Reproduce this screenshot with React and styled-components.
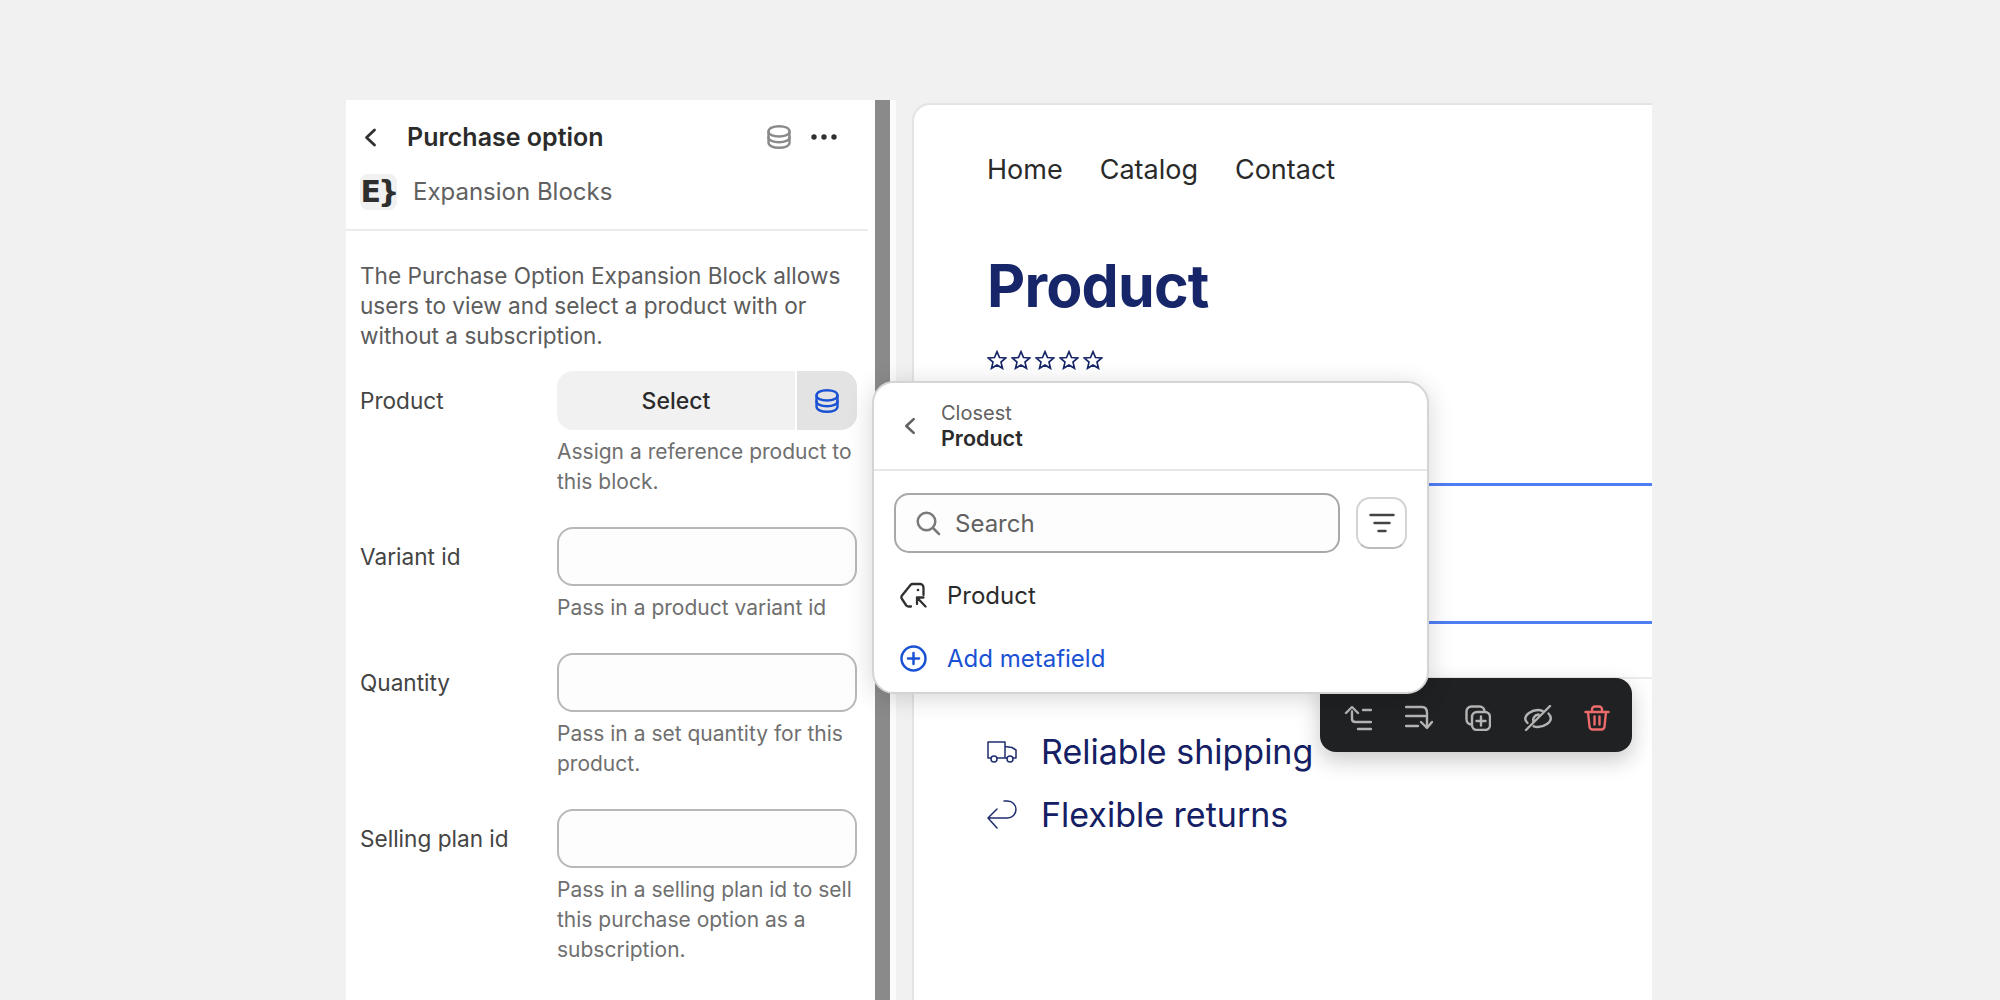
import React from "react";
import styled, { createGlobalStyle } from "styled-components";

const Global = createGlobalStyle`
  html, body { margin: 0; padding: 0; background: #f1f1f1; }
  body { font-family: Inter, "Liberation Sans", sans-serif; height: 1000px; overflow: hidden; }
  * { box-sizing: border-box; }
`;
const Stage = styled.div`position: relative; width: 2000px; height: 1000px; overflow: hidden; display: flex; padding: 100px 0 0 346px;`;
const Panel = styled.aside`width: 529px; height: 900px; background: #fff; padding-right: 7px; flex: none;`;
const Scrollbar = styled.div`width: 15px; height: 900px; background: #8a8a8a; flex: none;`;
const Strip = styled.div`width: 6px; height: 900px; background: #fbfbfb; flex: none;`;
const Frame = styled.main`width: 740px; height: 897px; margin: 3px 0 0 16px; background: #fff; border-top: 2px solid #e4e4e4; border-left: 2px solid #e4e4e4; border-top-left-radius: 18px; padding: 0 0 0 73px; flex: none; overflow: hidden;`;

const PanelHead = styled.header`display: flex; align-items: center; height: 74px; padding: 0 0 0 18px; color: #303030;`;
const Title = styled.h1`margin: 0 0 0 30px; font-size: 25px; font-weight: 600; line-height: 30px; color: #2b2b2b; flex: 1;`;
const HeadIcons = styled.div`display: flex; align-items: center; gap: 20px; margin-right: 31px;`;
const AppRow = styled.div`display: flex; align-items: center; gap: 16px; height: 57px; padding: 0 0 20px 14px; border-bottom: 2px solid #ebebeb;`;
const Logo = styled.div`width: 37px; height: 36px; border-radius: 8px; background: #f1f1f1; color: #2e2e2e; font: 800 30px/36px "DejaVu Sans", Inter, sans-serif; display: flex; align-items: center; justify-content: center; letter-spacing: -3px;`;
const AppName = styled.div`font-size: 24px; line-height: 30px; color: #616161;`;
const Body = styled.div`padding: 30px 10px 0 14px;`;
const Intro = styled.p`margin: 0 0 20px; font-size: 22.6px; line-height: 30px; color: #5c5c5c;`;
const Field = styled.div`display: grid; grid-template-columns: 197px 300px; margin-bottom: 30px;`;
const Label = styled.label`font-size: 22.6px; line-height: 59px; color: #444;`;
const Help = styled.div`margin-top: 7px; font-size: 21px; line-height: 30px; color: #6f6f6f;`;
const Input = styled.div`height: 59px; border: 2px solid #b8b8b8; border-radius: 16px; background: #fdfdfd;`;
const Combo = styled.div`height: 59px; display: flex; gap: 2px; border-radius: 16px; overflow: hidden;`;
const SelectBtn = styled.div`flex: 1; background: #f1f1f1; color: #2b2b2b; font-size: 23px; font-weight: 500; display: flex; align-items: center; justify-content: center;`;
const SourceBtn = styled.div`width: 60px; background: #e3e3e3; display: flex; align-items: center; justify-content: center;`;

const Nav = styled.nav`display: flex; gap: 37px; padding-top: 47px; font-size: 27px; line-height: 36px; color: #2a2a2a;`;
const Heading = styled.h2`margin: 63px 0 0; font-size: 59px; font-weight: 700; line-height: 70px; letter-spacing: -0.8px; color: #172668;`;
const Rating = styled.div`display: flex; align-items: center; gap: 4px; margin-top: 24px; height: 30px; color: #172668; font-size: 22px;`;
const RuleBlue = styled.div`height: 3px; background: #4f7df3; margin-top: ${p => p.$gap}px;`;
const Rule = styled.div`height: 2px; background: #ececec; margin-top: 53px;`;
const Perks = styled.ul`list-style: none; margin: 52px 0 0; padding: 0; display: flex; flex-direction: column; gap: 22px;`;
const Perk = styled.li`display: flex; align-items: center; gap: 24px; font-size: 34px; line-height: 41px; color: #152064;`;

const Popup = styled.section`position: absolute; left: 872px; top: 381px; width: 557px; height: 313px; background: #fff; border-radius: 22px; border: 2px solid #d4d4d4; box-shadow: 0 4px 26px rgba(0,0,0,.16); display: flex; flex-direction: column;`;
const PopHead = styled.div`display: flex; align-items: center; height: 88px; padding: 0 0 0 30px; gap: 25px; border-bottom: 2px solid #e6e6e6;`;
const PopTitles = styled.div`display: flex; flex-direction: column;`;
const Crumb = styled.span`font-size: 20px; line-height: 25px; color: #616161;`;
const PopTitle = styled.span`font-size: 21.5px; line-height: 25px; font-weight: 600; color: #2b2b2b;`;
const SearchRow = styled.div`display: flex; align-items: center; gap: 16px; padding: 22px 0 0 20px;`;
const SearchBox = styled.div`width: 446px; height: 60px; border: 2px solid #a8a8a8; border-radius: 15px; background: #fdfdfd; display: flex; align-items: center; gap: 14px; padding-left: 20px; font-size: 24px; color: #616161;`;
const FilterBtn = styled.div`width: 51px; height: 52px; border: 2px solid #d4d4d4; border-bottom-color: #bcbcbc; border-radius: 14px; background: #fff; display: flex; align-items: center; justify-content: center;`;
const PopRow = styled.div`display: flex; align-items: center; gap: 20px; height: 30px; padding-left: 26px; font-size: 24px; color: ${p => p.$blue ? "#1a52d4" : "#2b2b2b"}; margin-top: ${p => p.$top}px;`;

const Toolbar = styled.div`position: absolute; left: 1320px; top: 678px; width: 312px; height: 74px; padding: 6px 22px 0 24px; background: #202123; border-radius: 16px; box-shadow: 0 8px 22px rgba(0,0,0,.22); display: flex; align-items: center; justify-content: space-between;`;

const Db = ({ color = "#8a8a8a", s = 2.4 }) => (
  <svg width="24" height="24" viewBox="0 0 24 24" fill="none" stroke={color} strokeWidth={s} strokeLinecap="round">
    <path d="M1.5 6.5C1.5 3.2 6 1.2 12 1.2s10.500 2 10.500 5.300v11c0 3.300-4.500 5.300-10.500 5.300S1.500 20.800 1.500 17.500z" />
    <path d="M1.500 6.500c0 3.100 4.500 5 10.500 5s10.500-1.900 10.500-5" />
    <path d="M1.500 12.300c0 3.100 4.500 5 10.500 5s10.500-1.900 10.500-5" />
  </svg>
);
const Chevron = ({ color = "#303030", w = 13, h = 19, s = 2.8 }) => (
  <svg width={w} height={h} viewBox="0 0 13 19" fill="none" stroke={color} strokeWidth={s} strokeLinecap="round" strokeLinejoin="round">
    <path d="M10.500 2L2.500 9.500l8 7.500" />
  </svg>
);
const Dots = () => (
  <svg width="26" height="6" viewBox="0 0 26 6" fill="#303030">
    <circle cx="3" cy="3" r="2.700" /><circle cx="13" cy="3" r="2.700" /><circle cx="23" cy="3" r="2.700" />
  </svg>
);
const SearchIcon = () => (
  <svg width="25" height="25" viewBox="0 0 25 25" fill="none" stroke="#7a7a7a" strokeWidth="2.500" strokeLinecap="round">
    <circle cx="10.500" cy="10.500" r="8.800" /><path d="M17 17l6 6" />
  </svg>
);
const FilterIcon = () => (
  <svg width="26" height="20" viewBox="0 0 26 20" fill="none" stroke="#444" strokeWidth="2.500" strokeLinecap="round">
    <path d="M1.500 2h23M5.500 10h15M9.500 18h7" />
  </svg>
);
const TagIcon = () => (
  <svg width="27" height="27" viewBox="0 0 27 27" fill="none" stroke="#303030" strokeWidth="2.300" strokeLinecap="round" strokeLinejoin="round">
    <path d="M11 24.500H8.500a3 3 0 0 1-2.200-1L2 17a3 3 0 0 1 0-3.500L10.500 3a3 3 0 0 1 2.300-1H20a3.500 3.500 0 0 1 3.500 3.500V13" />
    <circle cx="18" cy="8" r="1.300" fill="#303030" stroke="none" />
    <path d="M17 15.500h6.500M17 15.500V22M17 15.500l8.500 9" />
  </svg>
);
const PlusIcon = () => (
  <svg width="27" height="27" viewBox="0 0 27 27" fill="none" stroke="#1a52d4" strokeWidth="2.500" strokeLinecap="round">
    <circle cx="13.500" cy="13.500" r="12" /><path d="M13.500 8v11M8 13.500h11" />
  </svg>
);
const TIcon = ({ children, w = 28, color = "#b3b3b3" }) => (
  <svg width={w} height="26" viewBox={`0 0 ${w} 26`} fill="none" stroke={color} strokeWidth="2.400" strokeLinecap="round" strokeLinejoin="round">{children}</svg>
);
const Truck = () => (
  <svg width="30" height="22" viewBox="0 0 30 22" fill="none" stroke="#1f2d6e" strokeWidth="1.500" strokeLinejoin="round">
    <path d="M4 17H1V1h17v16H10M18 5.500l7 1 4 2.500v8h-3M18 17h2" />
    <circle cx="7" cy="18" r="3" /><circle cx="23" cy="18" r="3" />
  </svg>
);
const Return = () => (
  <svg width="30" height="29" viewBox="0 0 30 29" fill="none" stroke="#1f2d6e" strokeWidth="1.500" strokeLinecap="round" strokeLinejoin="round">
    <path d="M17 1h3.500a8.500 8.500 0 0 1 0 17H1M10 9l-9 9 9 10" />
  </svg>
);
const Star = () => (
  <svg width="20" height="20" viewBox="0 0 24 24" fill="none" stroke="#172668" strokeWidth="2">
    <path d="M12 2l3 7 7.500.6-5.700 5 1.800 7.400L12 18l-6.600 4 1.800-7.400-5.700-5L9 9z" />
  </svg>
);

const fields = [
  { label: "Variant id", help: "Pass in a product variant id" },
  { label: "Quantity", help: "Pass in a set quantity for this product." },
  { label: "Selling plan id", help: "Pass in a selling plan id to sell this purchase option as a subscription." },
];

export default function App() {
  return (
    <>
      <Global />
      <Stage>
        <Panel>
          <PanelHead>
            <Chevron />
            <Title>Purchase option</Title>
            <HeadIcons><Db /><Dots /></HeadIcons>
          </PanelHead>
          <AppRow>
            <Logo>E{"}"}</Logo>
            <AppName>Expansion Blocks</AppName>
          </AppRow>
          <Body>
            <Intro>The Purchase Option Expansion Block allows users to view and select a product with or without a subscription.</Intro>
            <Field>
              <Label>Product</Label>
              <div>
                <Combo>
                  <SelectBtn>Select</SelectBtn>
                  <SourceBtn><Db color="#1a52d4" /></SourceBtn>
                </Combo>
                <Help>Assign a reference product to this block.</Help>
              </div>
            </Field>
            {fields.map(f => (
              <Field key={f.label}>
                <Label>{f.label}</Label>
                <div><Input /><Help>{f.help}</Help></div>
              </Field>
            ))}
          </Body>
        </Panel>
        <Scrollbar />
        <Strip />
        <Frame>
          <Nav><span>Home</span><span>Catalog</span><span>Contact</span></Nav>
          <Heading>Product</Heading>
          <Rating><Star /><Star /><Star /><Star /><Star /></Rating>
          <RuleBlue $gap={108} />
          <RuleBlue $gap={135} />
          <Rule />
          <Perks>
            <Perk><Truck />Reliable shipping</Perk>
            <Perk><Return />Flexible returns</Perk>
          </Perks>
        </Frame>
        <Toolbar>
          <TIcon w={28}><path d="M8 14V6.500M2 8l6-6 6 6M8 14c0 2 1.500 3 3.500 3H27M19 5h8M14 24h13" /></TIcon>
          <TIcon w={28}><path d="M1 2h16M1 11h19M1 21h12M17 2c3 0 5 2 5 6v14M16 17l6 6 5-6" /></TIcon>
          <TIcon w={26}><rect x="1.500" y="1.500" width="18" height="18" rx="5" /><rect x="7" y="7" width="18" height="18" rx="5" fill="#202123" /><path d="M16 11.500v9M11.500 16h9" /></TIcon>
          <TIcon w={28}><path d="M3.500 18C2 16.500 1.200 14.800 1.200 13.500 1.200 10 7 5 14 5c1.500 0 3 .3 4.500.8M24.500 8.500c1.500 1.500 2.300 3.500 2.300 5 0 3.500-5.800 8.500-12.800 8.500-1.500 0-3-.2-4.300-.7M9.500 17c-1-3 .5-7 5-7.500M2 25L26 1" /></TIcon>
          <TIcon w={26} color="#ee6b6b"><path d="M1.500 7h23M8 7V4.500A3 3 0 0 1 11 1.500h4a3 3 0 0 1 3 3V7M4 7l1.500 14.500a3 3 0 0 0 3 3h9a3 3 0 0 0 3-3L22 7M10.500 11.500v8M15.500 11.500v8" /></TIcon>
        </Toolbar>
        <Popup>
          <PopHead>
            <Chevron color="#616161" w={12} h={18} />
            <PopTitles><Crumb>Closest</Crumb><PopTitle>Product</PopTitle></PopTitles>
          </PopHead>
          <SearchRow>
            <SearchBox><SearchIcon />Search</SearchBox>
            <FilterBtn><FilterIcon /></FilterBtn>
          </SearchRow>
          <PopRow $top={27}><TagIcon />Product</PopRow>
          <PopRow $top={33} $blue><PlusIcon />Add metafield</PopRow>
        </Popup>
      </Stage>
    </>
  );
}
